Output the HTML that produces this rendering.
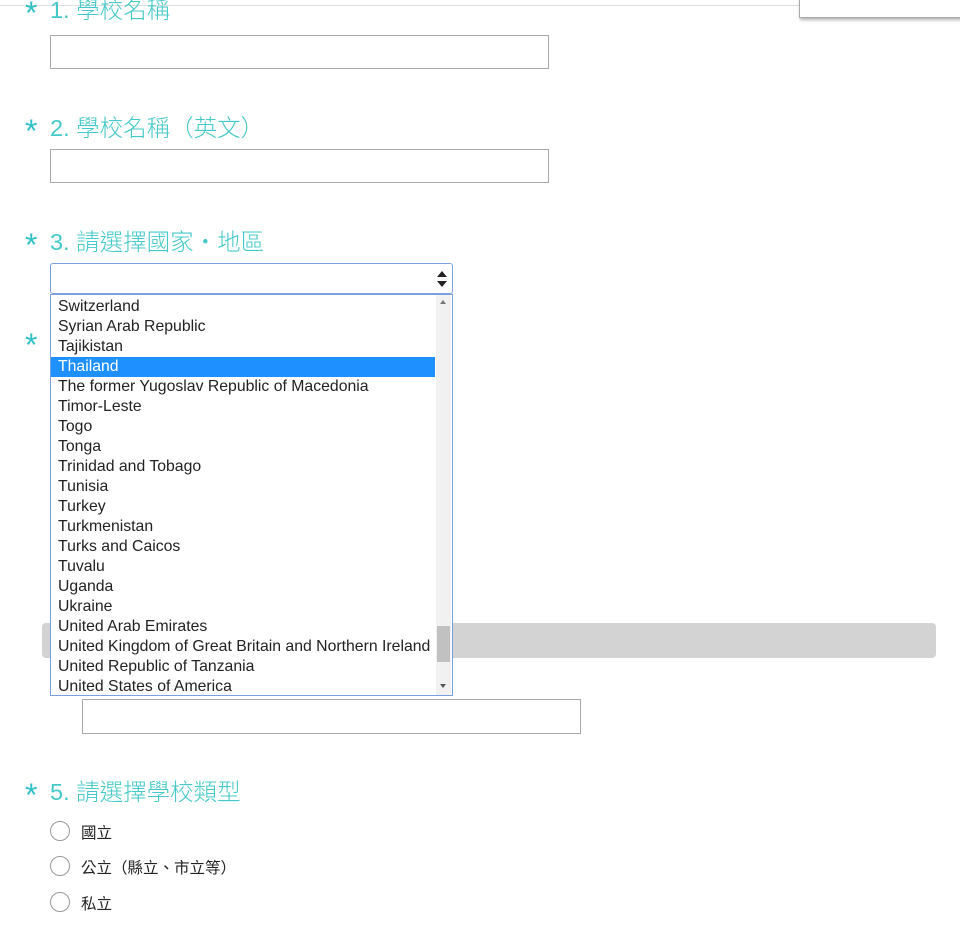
<!DOCTYPE html>
<html><head><meta charset="utf-8"><style>
body{margin:0;width:960px;height:926px;overflow:hidden;background:#fff;position:relative;font-family:"Liberation Sans","Noto Sans CJK TC",sans-serif}
.a{position:absolute}
.lbl{position:absolute;left:25px;color:#45c8c8;font-size:23.5px;white-space:nowrap;font-family:"Liberation Sans","Noto Sans CJK TC",sans-serif;font-weight:300;letter-spacing:0px}
.lbl b{font-weight:normal;font-size:32px;display:inline-block;width:25px;vertical-align:-6px;color:#30c0c8}
.inp{position:absolute;border:1px solid #a9a9a9;background:#fff;box-sizing:border-box}
.list{position:absolute;left:50px;top:294px;width:403px;height:402px;border:1px solid #7aa0e0;box-sizing:border-box;background:#fff;font-size:15.8px;color:#222}
.list .r{height:20px;line-height:20px;padding-left:7px;white-space:nowrap}
.sel{background:#1e90ff;color:#fff;width:377px}
.radio{position:absolute;left:50px;width:18px;height:18px;border:1px solid #999;border-radius:50%}
.rt{position:absolute;left:81px;font-size:15.5px;color:#222;font-family:"Liberation Sans","Noto Sans CJK TC",sans-serif}
</style></head><body>
<div class="a" style="left:0;top:5px;width:800px;height:1px;background:#ddd"></div>
<div class="a" style="left:799px;top:-2px;width:170px;height:18px;border:1px solid #aaa;background:#fff;box-shadow:1px 2px 3px rgba(0,0,0,.3)"></div>
<div class="lbl" style="top:-9px"><b>*</b>1. 學校名稱</div>
<div class="inp" style="left:50px;top:35px;width:499px;height:34px"></div>
<div class="lbl" style="top:109px"><b>*</b>2. 學校名稱（英文）</div>
<div class="inp" style="left:50px;top:149px;width:499px;height:34px"></div>
<div class="lbl" style="top:223px"><b>*</b>3. 請選擇國家・地區</div>
<div class="inp" style="left:50px;top:263px;width:403px;height:31px;border:1px solid #7aa0e0;border-radius:3px"></div>
<svg class="a" style="left:436px;top:269px" width="12" height="20"><path d="M1 8L6 2L11 8Z M1 12L6 18L11 12Z" fill="#222"/></svg>
<div class="lbl" style="top:327px"><b>*</b></div>
<div class="a" style="left:42px;top:623px;width:894px;height:35px;background:#d3d3d3;border-radius:4px"></div>
<div class="inp" style="left:82px;top:699px;width:499px;height:35px"></div>
<div class="list">
<div class="r" style="margin-top:2px">Switzerland</div><div class="r">Syrian Arab Republic</div><div class="r">Tajikistan</div><div class="r sel">Thailand</div><div class="r">The former Yugoslav Republic of Macedonia</div><div class="r">Timor-Leste</div><div class="r">Togo</div><div class="r">Tonga</div><div class="r">Trinidad and Tobago</div><div class="r">Tunisia</div><div class="r">Turkey</div><div class="r">Turkmenistan</div><div class="r">Turks and Caicos</div><div class="r">Tuvalu</div><div class="r">Uganda</div><div class="r">Ukraine</div><div class="r">United Arab Emirates</div><div class="r">United Kingdom of Great Britain and Northern Ireland</div><div class="r">United Republic of Tanzania</div><div class="r">United States of America</div>
<div class="a" style="left:385px;top:0;width:15px;height:400px;background:#f1f1f1"></div>
<div class="a" style="left:386px;top:331px;width:13px;height:36px;background:#c1c1c1"></div>
<svg class="a" style="left:387px;top:3px" width="10" height="8"><path d="M2 6L5 2L8 6Z" fill="#777"/></svg>
<svg class="a" style="left:387px;top:387px" width="10" height="8"><path d="M2 2L5 6L8 2Z" fill="#555"/></svg>
</div>
<div class="lbl" style="top:773px"><b>*</b>5. 請選擇學校類型</div>
<div class="radio" style="top:821px"></div><div class="rt" style="top:821px">國立</div>
<div class="radio" style="top:856px"></div><div class="rt" style="top:856px">公立（縣立、市立等）</div>
<div class="radio" style="top:892px"></div><div class="rt" style="top:892px">私立</div>
</body></html>
